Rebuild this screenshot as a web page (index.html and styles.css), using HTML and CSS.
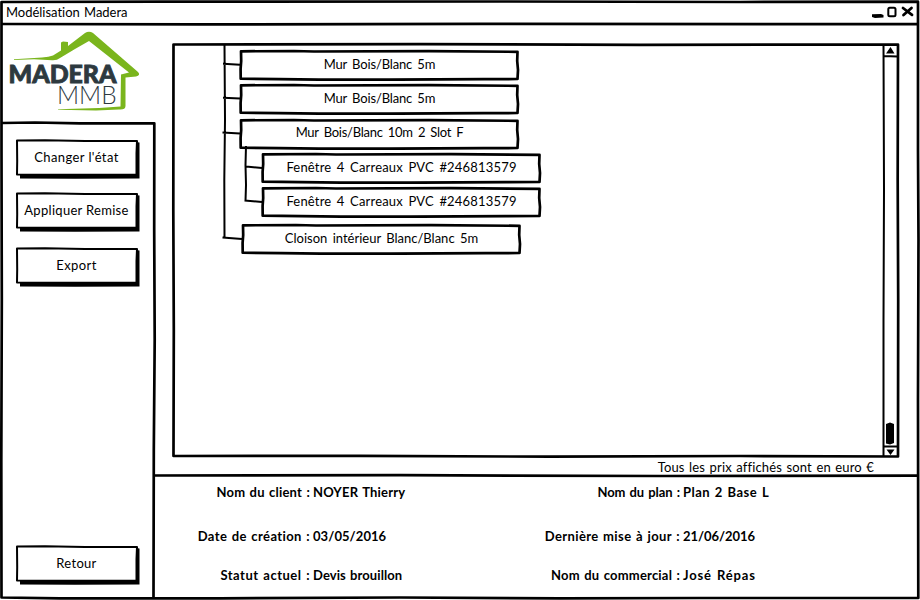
FILE: index.html
```html
<!DOCTYPE html>
<html lang="fr">
<head>
<meta charset="utf-8">
<title>Modélisation Madera</title>
<link rel="stylesheet" href="styles.css">
</head>
<body>
<svg class="defs" aria-hidden="true">
  <symbol id="box" viewBox="0 0 281 32" preserveAspectRatio="none">
    <path class="pen" d="M2 2.300L55 2L75 2.500L190 2.200L278.500 2.800L278.200 12L279 21L278.500 30L245 30.200L150 30.700L80 30.600L40 30.200L1.700 29.700L1.600 20L2.200 12Z"/>
  </symbol>
  <symbol id="button" viewBox="0 0 125 40">
    <path class="solid" d="M121 3L124.500 3.500L124.500 39.500L60 39.700L5 39.500V35L121 34.500Z"/>
    <path class="pen-thin face" d="M2 1.500L30 1.300L70 2L122 2L121.500 14L121.500 35.500L60 35.800L2 35.600L2.200 22Z"/>
  </symbol>
</svg>
<div class="window">
  <header class="titlebar">
    <h1>Modélisation Madera</h1>
    <svg class="controls" width="44" height="14" viewBox="870 5 44 14">
      <path d="M872 14.300L881 14L883.500 15V17.500L875 18L872 17Z"/>
      <rect x="888.300" y="7.700" width="7.200" height="8.500" rx="1.500" class="pen-thin"/>
      <path d="M903 8L912 14.800M911.500 8L903.500 15" class="cross"/>
    </svg>
  </header>
  <div class="content">
    <aside>
      <svg class="logo" width="145" height="98" viewBox="0 25 145 98">
        <path class="roof" d="M14 59.200L42 57.400Q49 57 53 55.500L61 50.500V42.500L63 41.500L68 42V46L85 33Q89 30.500 93 33L138 72Q141 75 136 76.500L125.500 77.500V106Q125.500 110 119 109.500L96 110.500L58 109.800L58 109.200L99 108L120.500 106.500L121 74.500L129 72.500L89 41L75 49L60 58Q57 60.500 52 60.200L34 59.300L14 60Z"/>
        <text x="8.500" y="82.700" class="brand" textLength="108" lengthAdjust="spacingAndGlyphs">MADERA</text>
        <text x="57" y="103.500" class="brand-sub" textLength="59.500" lengthAdjust="spacingAndGlyphs">MMB</text>
      </svg>
      <nav>
        <button class="button state"><svg><use href="#button"/></svg><span>Changer l'état</span></button>
        <button class="button discount"><svg><use href="#button"/></svg><span>Appliquer Remise</span></button>
        <button class="button export"><svg><use href="#button"/></svg><span>Export</span></button>
        <button class="button back"><svg><use href="#button"/></svg><span>Retour</span></button>
      </nav>
    </aside>
    <main>
      <section class="plan">
        <div class="tree">
          <div class="node wall"><svg><use href="#box"/></svg><span>Mur Bois/Blanc 5m</span></div>
          <div class="node wall"><svg><use href="#box"/></svg><span>Mur Bois/Blanc 5m</span></div>
          <div class="node slot"><svg><use href="#box"/></svg><span>Mur Bois/Blanc 10m 2 Slot F</span></div>
          <div class="node window-item"><svg><use href="#box"/></svg><span>Fenêtre 4 Carreaux PVC #246813579</span></div>
          <div class="node window-item"><svg><use href="#box"/></svg><span>Fenêtre 4 Carreaux PVC #246813579</span></div>
          <div class="node partition"><svg><use href="#box"/></svg><span>Cloison intérieur Blanc/Blanc 5m</span></div>
        </div>
      </section>
      <p class="note">Tous les prix affichés sont en euro €</p>
      <section class="info">
        <dl>
          <dt>Nom du client :</dt><dd>NOYER Thierry</dd>
          <dt class="wide">Date de création :</dt><dd class="snug">03/05/2016</dd>
          <dt class="wider">Statut actuel :</dt><dd class="snug">Devis brouillon</dd>
        </dl>
        <dl>
          <dt class="tight">Nom du plan :</dt><dd class="wider">Plan 2 Base L</dd>
          <dt class="wide">Dernière mise à jour :</dt><dd class="tight">21/06/2016</dd>
          <dt>Nom du commercial :</dt><dd class="widest">José Répas</dd>
        </dl>
      </section>
    </main>
  </div>
  <svg class="lines" viewBox="0 0 920 600" aria-hidden="true">
    <g class="pen">
      <path d="M1.500 2L160 1.700L500 1.500L740 2L918 1.700L918 150L918.500 240L918 400L918.300 598L700 598L560 598.300L400 597.500L220 598.300L60 598.300L1.500 597.500L1.300 460L1.800 300L1.500 150Z"/>
      <path d="M2 24L200 24.400L480 23.800L918 24.200"/>
      <path d="M2 123L35 122.500L80 123.300L154.300 123.300L154.200 230L154.700 340L153.800 450L153.500 598"/>
      <path d="M154 475.500L400 475.200L660 476L918 475.700"/>
      <path d="M173.500 44.500L420 44.200L640 44.800L898 44.500L897.700 180L898.200 300L898 456.500L740 456L550 456.700L360 455.800L173.500 456L173.800 330L173.300 210Z"/>
    </g>
    <g class="pen-thin">
      <path d="M883.500 45L884 190L883.500 320L883.500 456M884 56L897 56.500M884 446.500L897 446.500"/>
      <path d="M224.500 45L225 120L224.300 180L224.500 238M223 63.800L240 64.800M223 97.800L240 98.500M222.500 132.500L240 133.500M222.500 237.500L242 239M246 146L245.500 165L246 185L245.500 201M246 166.500L262 168M244.500 200.500L262 202"/>
    </g>
    <path d="M886 53.500L890.500 47L894.500 53.500ZM886.500 449.500L890.500 455L894.500 449.500ZM886 424L890 422.500L894 424V443L890 444.500L886 443.500Z"/>
  </svg>
</div>
</body>
</html>
```
FILE: styles.css
```css
* { box-sizing: border-box; }
body { margin: 0; background: #fff; color: #000; font: 13px/18px Lato, "Open Sans", sans-serif; }
h1, p, dl, dd { margin: 0; }
.defs { position: absolute; width: 0; height: 0; }
.pen { fill: none; stroke: #000; stroke-width: 2.700; stroke-linejoin: round; }
.pen-thin { fill: none; stroke: #000; stroke-width: 2; stroke-linejoin: round; }
.face { fill: #fff; }
.window { position: relative; width: 920px; height: 600px; display: flex; flex-direction: column; overflow: hidden; }
.lines { position: absolute; inset: 0; width: 920px; height: 600px; pointer-events: none; }
.titlebar { height: 25px; flex: none; display: flex; justify-content: space-between; padding: 3px 6px 0; }
h1 { font-size: 13px; font-weight: 400; letter-spacing: -.02px; word-spacing: 1px; white-space: nowrap; }
.controls { margin-top: 2px; }
.cross { fill: none; stroke: #000; stroke-width: 2.800; stroke-linecap: round; }
.content { flex: 1; display: grid; grid-template-columns: 155px 1fr; min-height: 0; }
aside { display: flex; flex-direction: column; }
.logo { display: block; flex: none; }
.roof { fill: #7ab51d; }
.brand { font: 900 25px Lato, sans-serif; fill: #2d393f; stroke: #2d393f; stroke-width: .9; }
.brand-sub { font: 300 25px Lato, sans-serif; fill: #2d393f; }
nav { flex: 1; display: flex; flex-direction: column; padding: 16px 0 15px 15px; }
.button { position: relative; flex: none; width: 125px; height: 40px; padding: 0 2px 4px 0; border: 0; background: none; color: inherit; font: inherit; line-height: 18px; white-space: nowrap; }
.button svg, .node svg { position: absolute; inset: 0; width: 100%; height: 100%; }
.button span, .node span { position: relative; }
.discount { margin-top: 13px; }
.export { margin-top: 15px; }
.back { margin-top: auto; }
.state span { letter-spacing: .4px; }
.discount span { letter-spacing: .3px; }
.export span { letter-spacing: .4px; }
.back span { letter-spacing: .3px; }
main { display: flex; flex-direction: column; }
.plan { height: 433px; padding: 24px 0 0 84px; }
.tree { display: flex; flex-direction: column; }
.node { position: relative; flex: none; width: 281px; height: 32px; margin-bottom: 2.300px; display: flex; align-items: center; justify-content: center; white-space: nowrap; }
.node span { top: -1.200px; }
.wall span { letter-spacing: -.15px; word-spacing: 2px; }
.slot span { letter-spacing: -.25px; word-spacing: 2px; }
.window-item { margin-left: 22px; }
.window-item span { letter-spacing: .18px; word-spacing: 2px; }
.partition { margin: 3px 0 0 2px; }
.partition span { letter-spacing: 0; word-spacing: 2px; }
.note { height: 18px; text-align: right; padding-right: 46px; white-space: nowrap; letter-spacing: .15px; word-spacing: 1px; }
.info { flex: 1; display: grid; grid-template-columns: 370px 1fr; padding-top: 7px; font-weight: 700; }
dl { display: grid; grid-template-columns: 155px 1fr; grid-template-rows: 44px 39px 18px; column-gap: 3px; letter-spacing: .2px; word-spacing: 1px; white-space: nowrap; }
dt { text-align: right; }
.tight { letter-spacing: -.05px; }
.snug { letter-spacing: .08px; }
.wide { letter-spacing: .38px; }
.wider { letter-spacing: .5px; }
.widest { letter-spacing: .85px; }
```
